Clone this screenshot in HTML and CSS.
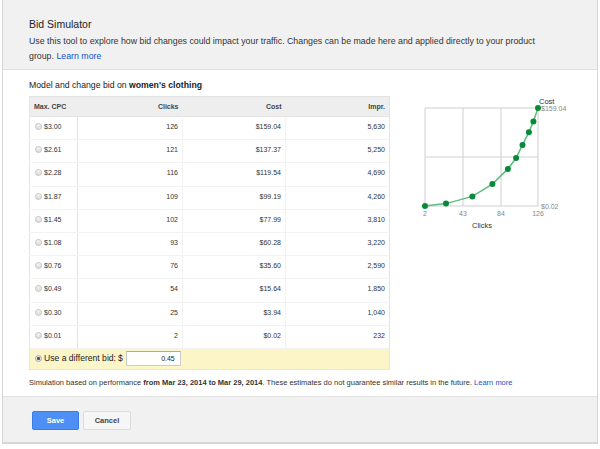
FILE: index.html
```html
<!DOCTYPE html>
<html lang="en">
<head>
    <meta charset="UTF-8"/>
    <title>Bid Simulator</title>
    <link rel="stylesheet" href="styles.css">
</head>
<body>
<div class="dialog">
    <div class="dialog-header">
        <h1>Bid Simulator</h1>
        <p class="desc">
            Use this tool to explore how bid changes could impact your traffic. Changes can be made here and applied directly to your product
            group. <a href="#">Learn more</a>
        </p>
    </div>

    <div class="dialog-body">
        <p class="intro">Model and change bid on <strong>women's clothing</strong></p>
        <div class="sim">
            <table class="bids">
                <thead>
                <tr>
                    <th class="cpc">Max. CPC</th>
                    <th>Clicks</th>
                    <th>Cost</th>
                    <th>Impr.</th>
                </tr>
                </thead>
                <tbody>
                <tr><td class="cpc"><span class="radio"></span>$3.00</td><td>126</td><td>$159.04</td><td>5,630</td></tr>
                <tr><td class="cpc"><span class="radio"></span>$2.61</td><td>121</td><td>$137.37</td><td>5,250</td></tr>
                <tr><td class="cpc"><span class="radio"></span>$2.28</td><td>116</td><td>$119.54</td><td>4,690</td></tr>
                <tr><td class="cpc"><span class="radio"></span>$1.87</td><td>109</td><td>$99.19</td><td>4,260</td></tr>
                <tr><td class="cpc"><span class="radio"></span>$1.45</td><td>102</td><td>$77.99</td><td>3,810</td></tr>
                <tr><td class="cpc"><span class="radio"></span>$1.08</td><td>93</td><td>$60.28</td><td>3,220</td></tr>
                <tr><td class="cpc"><span class="radio"></span>$0.76</td><td>76</td><td>$35.60</td><td>2,590</td></tr>
                <tr><td class="cpc"><span class="radio"></span>$0.49</td><td>54</td><td>$15.64</td><td>1,850</td></tr>
                <tr><td class="cpc"><span class="radio"></span>$0.30</td><td>25</td><td>$3.94</td><td>1,040</td></tr>
                <tr><td class="cpc"><span class="radio"></span>$0.01</td><td>2</td><td>$0.02</td><td>232</td></tr>
                <tr class="custom">
                    <td colspan="4">
                        <span class="radio checked"></span>Use a different bid:<span class="dollar">$</span><span class="bid-input">0.45</span>
                    </td>
                </tr>
                </tbody>
            </table>

            <svg class="chart" width="170" height="145" viewBox="0 0 170 145">
                <g class="grid">
                    <line x1="25" y1="19" x2="138" y2="19"/>
                    <line x1="25" y1="68" x2="138" y2="68"/>
                    <line x1="25" y1="117" x2="138" y2="117"/>
                    <line x1="25" y1="19" x2="25" y2="117"/>
                    <line x1="63" y1="19" x2="63" y2="117"/>
                    <line x1="101" y1="19" x2="101" y2="117"/>
                    <line x1="138" y1="19" x2="138" y2="117"/>
                </g>
                <polyline class="curve" points="25,117 46,114.6 72.4,107.4 92.4,95.1 107.9,79.9 116.1,69 122.5,55.9 128.9,43.3 133.4,32.4 138,19"/>
                <g class="dots">
                    <circle cx="25" cy="117" r="3"/>
                    <circle cx="46" cy="114.6" r="3"/>
                    <circle cx="72.4" cy="107.4" r="3"/>
                    <circle cx="92.4" cy="95.1" r="3"/>
                    <circle cx="107.9" cy="79.9" r="3"/>
                    <circle cx="116.1" cy="69" r="3"/>
                    <circle cx="122.5" cy="55.9" r="3"/>
                    <circle cx="128.9" cy="43.3" r="3"/>
                    <circle cx="133.4" cy="32.4" r="3"/>
                    <circle cx="138" cy="19" r="3"/>
                </g>
                <text class="axis-title" x="139" y="14.5">Cost</text>
                <text class="tick" x="141" y="22">$159.04</text>
                <text class="tick" x="141" y="120">$0.02</text>
                <text class="tick" x="25" y="127" text-anchor="middle">2</text>
                <text class="tick" x="63" y="127" text-anchor="middle">43</text>
                <text class="tick" x="101" y="127" text-anchor="middle">84</text>
                <text class="tick" x="138" y="127" text-anchor="middle">126</text>
                <text class="axis-title" x="82" y="139" text-anchor="middle">Clicks</text>
            </svg>
        </div>
        <p class="note">
            Simulation based on performance <strong>from Mar 23, 2014 to Mar 29, 2014</strong>. These estimates do not guarantee similar results in the future. <a href="#">Learn more</a>
        </p>
    </div>

    <div class="dialog-footer">
        <button class="btn btn-save">Save</button>
        <button class="btn btn-cancel">Cancel</button>
    </div>
</div>
</body>
</html>
```

FILE: styles.css
```css
body {
    margin: 0;
    font-family: "Liberation Sans", Arial, sans-serif;
    color: #222;
    background: #fff;
}

a {
    color: #15c;
    text-decoration: none;
}

.dialog {
    box-sizing: border-box;
    width: 596px;
    margin-left: 2px;
    border: 1px solid #d6d6d6;
    border-top: none;
}

.dialog-header {
    box-sizing: border-box;
    height: 70px;
    padding: 18px 26px 0;
    background: #f1f1f1;
    border-bottom: 1px solid #e0e0e0;
}

h1 {
    margin: 0;
    font-size: 10.5px;
    line-height: 13px;
    font-weight: normal;
    color: #222;
}

.desc {
    max-width: 525px;
    margin: 3px 0 0;
    font-size: 8.8px;
    line-height: 15px;
    color: #333;
}

.dialog-body {
    box-sizing: border-box;
    height: 326px;
    padding: 10px 26px 0;
}

.intro {
    margin: 0 0 5px;
    font-size: 8.7px;
    line-height: 11px;
}

.sim {
    display: flex;
    align-items: flex-start;
}

.bids {
    flex-shrink: 0;
    width: 361px;
    border-collapse: collapse;
    font-size: 7px;
    color: #333;
    border: 1px solid #e4e4e4;
}

.bids th,
.bids td {
    box-sizing: border-box;
}

.bids th {
    height: 20px;
    padding: 0 4px;
    background: #eee;
    font-weight: bold;
    color: #444;
    text-align: right;
    border-bottom: 1px solid #e4e4e4;
}

.bids th.cpc {
    text-align: left;
}

.bids td {
    height: 23.2px;
    padding: 0 4px 3px;
    text-align: right;
    border-bottom: 1px solid #f2f2f2;
    border-left: 1px solid #f2f2f2;
}

.bids td.cpc {
    padding-left: 5px;
    text-align: left;
    border-left: none;
    border-right: 1px solid #e4e4e4;
}

.bids th:nth-child(1), .bids td:nth-child(1) {
    width: 48px;
}

.bids th:nth-child(2), .bids td:nth-child(2) {
    width: 105px;
}

.bids th:nth-child(3), .bids td:nth-child(3) {
    width: 103px;
}

.radio {
    display: inline-block;
    box-sizing: border-box;
    width: 7px;
    height: 7px;
    margin-right: 2px;
    vertical-align: -1px;
    border: 1px solid #c4c4c4;
    border-radius: 50%;
    background: linear-gradient(#f4f4f4, #dcdcdc);
}

.radio.checked {
    background: radial-gradient(circle, #555 0, #555 1.3px, #e6e6e6 1.8px);
    border-color: #aaa;
}

.bids tr.custom td {
    width: auto;
    height: 21px;
    padding: 0 5px;
    text-align: left;
    background: #fcf5c8;
    border: none;
    font-size: 8.6px;
    color: #222;
}

.dollar {
    margin-left: 2px;
}

.bid-input {
    display: inline-block;
    box-sizing: border-box;
    width: 55px;
    height: 15px;
    margin-left: 3px;
    padding: 0 5px;
    border: 1px solid #ccc;
    border-top-color: #aaa;
    background: #fff;
    font-size: 7px;
    line-height: 13px;
    text-align: right;
    vertical-align: middle;
}

.chart {
    display: block;
    flex-shrink: 0;
    margin: -7px 0 0 10px;
    font-family: "Liberation Sans", Arial, sans-serif;
}

.grid line {
    stroke: #cfcfcf;
    stroke-width: 1;
}

.curve {
    fill: none;
    stroke: #5cbb80;
    stroke-width: 1.5;
}

.dots circle {
    fill: #078a37;
}

.tick {
    font-size: 7px;
    fill: #888;
}

.axis-title {
    font-size: 7.5px;
    fill: #333;
}

.note {
    margin: 7px 0 0;
    font-size: 7.5px;
    line-height: 11px;
    color: #333;
}

.dialog-footer {
    box-sizing: border-box;
    height: 47px;
    padding: 14px 29px 0;
    background: #f1f1f1;
    border-top: 1px solid #e2e2e2;
    border-bottom: 1px solid #d6d6d6;
    display: flex;
    gap: 4px;
    align-items: flex-start;
}

.btn {
    box-sizing: border-box;
    height: 19px;
    border-radius: 2px;
    font-family: "Liberation Sans", Arial, sans-serif;
    font-size: 7.5px;
    font-weight: bold;
    cursor: pointer;
}

.btn-save {
    width: 47px;
    background: #4d8ff5;
    border: 1px solid #3c7ce6;
    color: #fff;
}

.btn-cancel {
    width: 48px;
    background: #f6f6f6;
    border: 1px solid #dcdcdc;
    color: #444;
}
```
